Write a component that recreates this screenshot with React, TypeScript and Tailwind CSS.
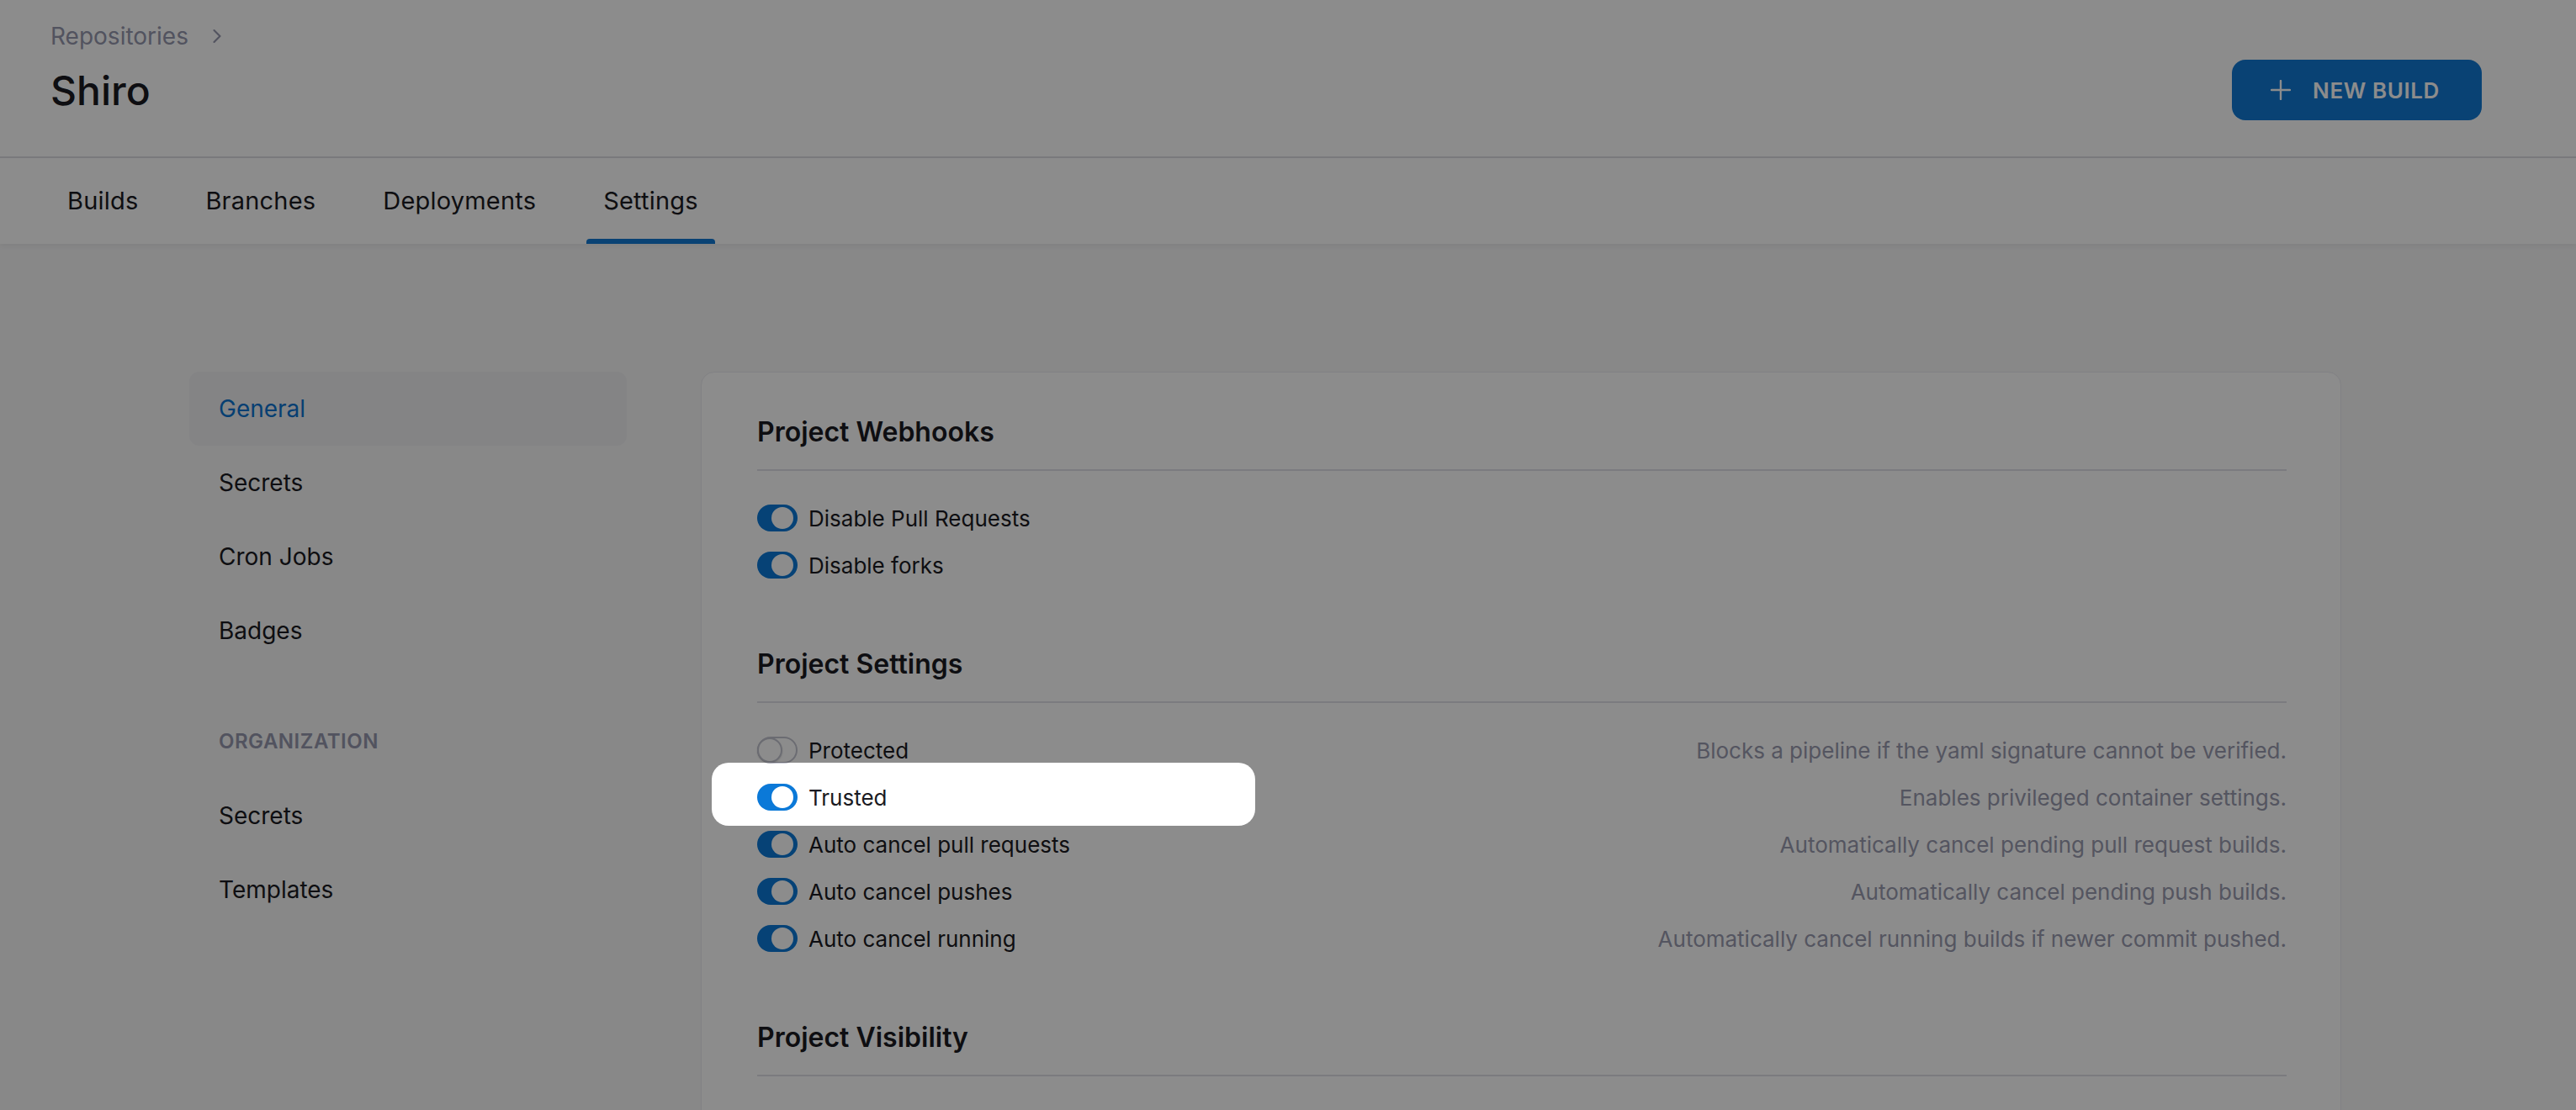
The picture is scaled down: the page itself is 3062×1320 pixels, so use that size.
import { ChevronRight } from "lucide-react";

interface ToggleProps {
  on: boolean;
}

function Toggle({ on }: ToggleProps) {
  if (!on) {
    return (
      <span className="flex h-[32px] w-[48px] shrink-0 items-center rounded-full border-2 border-[#c4c5d0] bg-white">
        <span className="-ml-[2px] h-[30px] w-[30px] rounded-full border-2 border-[#c4c5d0] bg-white shadow-[0_1px_2px_rgba(0,0,0,0.15)]" />
      </span>
    );
  }
  return (
    <span className="flex h-[32px] w-[48px] shrink-0 items-center justify-end rounded-full bg-[#0b79d8] pr-[5px]">
      <span className="h-[26px] w-[26px] rounded-full bg-white" />
    </span>
  );
}

interface RowProps {
  label: string;
  on: boolean;
  description?: string;
  spotlight?: boolean;
}

function SettingRow({ label, on, description, spotlight }: RowProps) {
  return (
    <div className="relative flex h-[56px] items-center">
      {spotlight && (
        <div className="pointer-events-none absolute left-[-54px] top-[-13px] z-10 h-[75px] w-[646px] rounded-[20px] shadow-[0_0_0_6000px_rgba(0,0,0,0.45)]" />
      )}
      <Toggle on={on} />
      <span className="ml-[13px] text-[26px] text-[#1a1a22]">{label}</span>
      {description && <span className="ml-auto text-[26px] text-[#9a9bb0]">{description}</span>}
    </div>
  );
}

function Section({ title, children, first }: { title: string; children?: React.ReactNode; first?: boolean }) {
  return (
    <section className={first ? "" : "mt-[66px]"}>
      <h2 className="border-b-2 border-[#e1e1e8] pb-[20px] text-[32px] font-semibold leading-[48px] text-[#1a1a22]">
        {title}
      </h2>
      {children && <div className="mt-[28px]">{children}</div>}
    </section>
  );
}

const tabs = ["Builds", "Branches", "Deployments", "Settings"];

export default function App() {
  return (
    <div className="relative h-[1320px] overflow-hidden bg-[#f7f7f8] font-['Inter',sans-serif]">
      <header className="bg-white">
        <div className="flex h-[188px] items-start justify-between border-b-2 border-[#dedee3] pl-[60px] pr-[112px] pt-[26px]">
          <div>
            <div className="flex items-center gap-[8px] text-[28px] leading-[34px] text-[#9597ad]">
              <span>Repositories</span>
              <ChevronRight className="ml-[12px] h-[28px] w-[28px]" strokeWidth={1.8} />
            </div>
            <h1 className="mt-[19px] text-[48px] font-medium leading-[58px] text-[#1a1a22]">Shiro</h1>
          </div>
          <button className="mt-[45px] flex h-[72px] items-center gap-[26px] rounded-[16px] bg-[#1178d4] pl-[46px] pr-[50px] text-[26px] font-semibold uppercase tracking-[0.6px] text-white">
            <svg viewBox="0 0 24 24" className="h-[24px] w-[24px]" fill="none" stroke="currentColor" strokeWidth={2.4} strokeLinecap="round">
              <path d="M12 1v22M1 12h22" />
            </svg>
            New Build
          </button>
        </div>
        <nav className="flex h-[102px] gap-[40px] px-[60px] shadow-[0_3px_6px_rgba(0,0,0,0.05)]">
          {tabs.map((t) => (
            <div key={t} className="relative flex items-center px-[20px] text-[29px] tracking-[0.2px] text-[#1a1a22]">
              {t}
              {t === "Settings" && (
                <span className="absolute bottom-0 left-0 right-0 h-[6px] rounded-t-[4px] bg-[#1178d4]" />
              )}
            </div>
          ))}
        </nav>
      </header>

      <main className="flex gap-[88px] pl-[225px] pr-[279px] pt-[152px]">
        <aside className="w-[520px] shrink-0 text-[28px] text-[#1a1a22]">
          <div className="flex h-[88px] items-center rounded-[12px] bg-[#f0f0f3] px-[35px] text-[#0b74d0]">General</div>
          <div className="flex h-[88px] items-center px-[35px]">Secrets</div>
          <div className="flex h-[88px] items-center px-[35px]">Cron Jobs</div>
          <div className="flex h-[88px] items-center px-[35px]">Badges</div>
          <div className="mb-[24px] mt-[68px] px-[35px] text-[24px] font-semibold leading-[40px] tracking-[0.5px] text-[#9597ad]">
            ORGANIZATION
          </div>
          <div className="flex h-[88px] items-center px-[35px]">Secrets</div>
          <div className="flex h-[88px] items-center px-[35px]">Templates</div>
        </aside>

        <div className="min-h-[1000px] flex-1 rounded-[16px] border border-[#ececf0] bg-white pl-[66px] pr-[64px] pt-[47px]">
          <Section title="Project Webhooks" first>
            <SettingRow label="Disable Pull Requests" on />
            <SettingRow label="Disable forks" on />
          </Section>
          <Section title="Project Settings">
            <SettingRow label="Protected" on={false} description="Blocks a pipeline if the yaml signature cannot be verified." />
            <SettingRow label="Trusted" on spotlight description="Enables privileged container settings." />
            <SettingRow label="Auto cancel pull requests" on description="Automatically cancel pending pull request builds." />
            <SettingRow label="Auto cancel pushes" on description="Automatically cancel pending push builds." />
            <SettingRow label="Auto cancel running" on description="Automatically cancel running builds if newer commit pushed." />
          </Section>
          <Section title="Project Visibility" />
        </div>
      </main>
    </div>
  );
}
